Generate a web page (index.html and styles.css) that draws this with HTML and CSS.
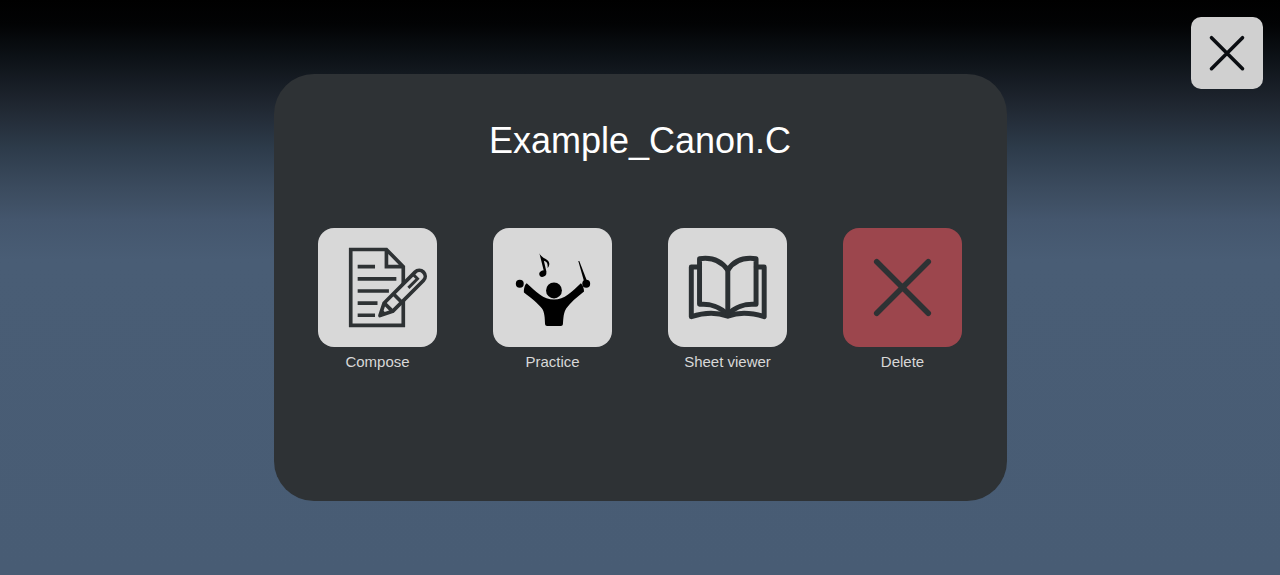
FILE: index.html
```html
<!DOCTYPE html>
<html lang="en">
<head>
<meta charset="utf-8">
<meta name="viewport" content="width=device-width, initial-scale=1">
<title>Example_Canon.C</title>
<link rel="stylesheet" href="styles.css">
</head>
<body class="page">
<button class="close" type="button" aria-label="Close">
  <svg class="icon" viewBox="0 0 72 72" aria-hidden="true">
    <path d="M20.5 20.7 51.5 51.7M51.5 20.7 20.5 51.7" fill="none" stroke="#0b0e12" stroke-width="3.6" stroke-linecap="round"/>
  </svg>
</button>
<main class="panel">
  <h1 class="title">Example_Canon.C</h1>
  <div class="actions">
    <button class="action" type="button">
      <span class="tile">
        <svg class="icon" viewBox="0 0 120 120" aria-hidden="true" fill="none" stroke="#2e3234" stroke-width="3.7">
          <path d="M33 21.7H69L86 39V98.2H33ZM69 21.7V39H86"/>
          <path d="M40 39H57.5M40 51.3H79M40 63.5H71.5M40 75.7H60M40 88H57.5"/>
          <g transform="translate(62.5 88.3) rotate(-45)" stroke-linejoin="round">
            <path d="M0 0 12-6H56A6 6 0 0 1 56 6H12Z" fill="#d8d8d8"/>
            <path d="M12-6V6M25-6V6"/>
            <path d="M40 0.500H53V-5" stroke-width="3" stroke-linejoin="miter"/>
            <path d="M0 0 5-2V2Z" fill="#2e3234" stroke-width="2"/>
          </g>
        </svg>
      </span>
      <span class="label">Compose</span>
    </button>
    <button class="action" type="button">
      <span class="tile">
        <svg class="icon" viewBox="0 0 120 120" aria-hidden="true" fill="#000">
          <circle cx="27" cy="56.3" r="4"/>
          <circle cx="94" cy="56.3" r="4"/>
          <circle cx="61.5" cy="63" r="8"/>
          <path d="M86 33.2 87 33.4 94.8 53.5 92 54.5Z"/>
          <path d="M34 55.6C43 64 51 72.2 61.5 72.2S80 64 88.6 55.6C90.5 57 91.8 61 91.8 64C84 70 78 75.5 74 81C71 85.5 71 91 70.500 97Q70.300 98.800 68.500 98.800H54.500Q52.700 98.800 52.500 97C52.200 91 52.200 85 49.200 81C45.500 76 39 71 31.200 65C31 61.500 31.800 57 34 55.600Z"/>
          <ellipse cx="50.2" cy="46" rx="3.6" ry="3.1" transform="rotate(-30 50.2 46)"/>
          <path d="M46.800 25.500C49 31 56.500 31 56.800 36C56.800 38 56 39.300 55 40.300C55.500 36 54.500 34 51.300 33L54 44.500 52 46.500Z"/>
        </svg>
      </span>
      <span class="label">Practice</span>
    </button>
    <button class="action" type="button">
      <span class="tile">
        <svg class="icon" viewBox="0 0 120 120" aria-hidden="true" fill="none" stroke="#2b3033" stroke-width="5" stroke-linejoin="round" stroke-linecap="round">
          <path d="M31 39.300H23.500V89.500C34 86 48 84.500 60.300 89C72 84.500 86 86 97 89.500V39.300H89"/>
          <path d="M60.300 42.500C53 32 42 29.500 31.800 31V77C42 76 53 79.500 60.300 87.500C67 79.500 78 76 88.800 77V31C78 29.500 67 32 60.300 42.500Z"/>
          <path d="M60.300 42.500V87.500"/>
        </svg>
      </span>
      <span class="label">Sheet viewer</span>
    </button>
    <button class="action" type="button">
      <span class="tile tile-danger">
        <svg class="icon" viewBox="0 0 120 120" aria-hidden="true">
          <path d="M34 34 86 86M86 34 34 86" fill="none" stroke="#2e3234" stroke-width="5.6" stroke-linecap="round"/>
        </svg>
      </span>
      <span class="label">Delete</span>
    </button>
  </div>
</main>
</body>
</html>
```
FILE: styles.css
```css
* {
  box-sizing: border-box;
}

.page {
  margin: 0;
  min-height: 100vh;
  display: grid;
  place-items: center;
  font-family: "Liberation Sans", Arial, sans-serif;
  background: linear-gradient(#000 0, #020304 24px, #0c1116 56px, #1f2630 104px, #2d3b4a 148px, #3b4b5e 188px, #44566d 220px, #495d75 260px, #485c74 100%);
}

.panel {
  width: 733px;
  max-width: 100%;
  padding: 46px 40px 131px;
  border-radius: 40px;
  background: #2e3235;
}

.title {
  margin: 0 0 66px;
  color: #fff;
  font-size: 36px;
  font-weight: 400;
  line-height: 42px;
  text-align: center;
}

.actions {
  display: flex;
  flex-wrap: wrap;
  justify-content: center;
  gap: 56px;
}

.action {
  display: flex;
  flex-direction: column;
  align-items: center;
  gap: 6px;
  padding: 0;
  border: 0;
  background: none;
  color: #d8d8d8;
  font: inherit;
  cursor: pointer;
}

.tile {
  width: 119px;
  height: 119px;
  border-radius: 16px;
  background: #d8d8d8;
}

.tile-danger {
  background: #9c464d;
}

.icon {
  display: block;
  width: 100%;
  height: 100%;
}

.label {
  font-size: 15px;
  line-height: 17px;
}

.close {
  position: absolute;
  top: 17px;
  right: 17px;
  width: 72px;
  height: 72px;
  padding: 0;
  border: 0;
  border-radius: 10px;
  background: #d0d0d0;
  cursor: pointer;
}
```
